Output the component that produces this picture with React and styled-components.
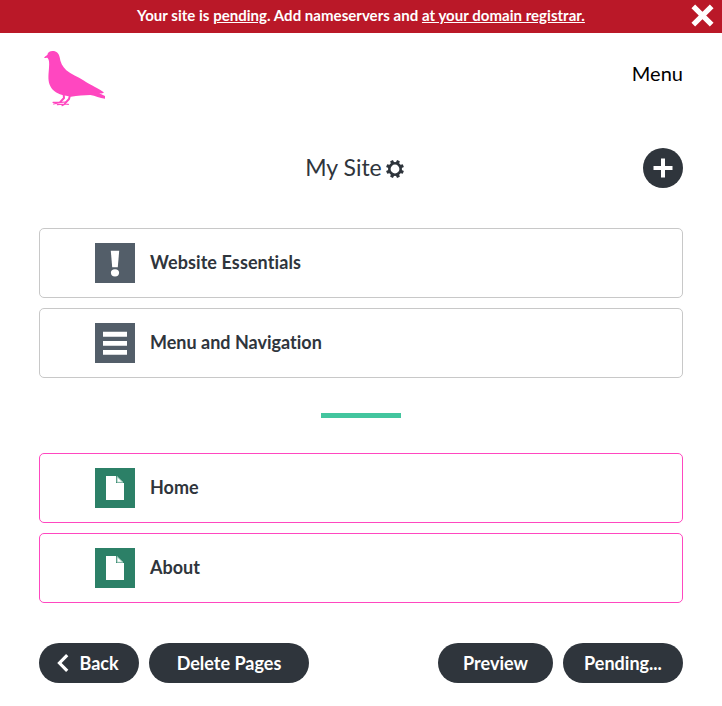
import React from "react";
import styled, { createGlobalStyle } from "styled-components";

const GlobalStyle = createGlobalStyle`
  *, *::before, *::after { box-sizing: border-box; }
  body {
    margin: 0;
    background: #fff;
    color: #2f353c;
    font-family: Lato, "Open Sans", sans-serif;
    font-variant-ligatures: none;
  }
  svg { display: block; flex: none; }
`;

const Banner = styled.div`
  display: grid;
  grid-template-columns: 38px 1fr 38px;
  align-items: center;
  height: 33px;
  background: #ba1828;
  color: #fff;
`;

const BannerText = styled.p`
  grid-column: 2;
  margin: 0;
  padding-bottom: 4px;
  font-size: 15px;
  line-height: 20px;
  font-weight: 700;
  letter-spacing: 0.03px;
  text-align: center;
  white-space: nowrap;
`;

const BannerLink = styled.a`
  color: inherit;
  text-decoration: underline;
`;

const CloseButton = styled.button`
  display: flex;
  align-items: center;
  height: 33px;
  padding: 0 0 3px 7px;
  border: 0;
  background: none;
  color: inherit;
`;

const Page = styled.div`
  padding: 0 39px;
`;

const Header = styled.header`
  display: flex;
  justify-content: space-between;
  height: 115px;
  padding: 17px 0 0 5px;
`;

const MenuLink = styled.a`
  margin-top: 11px;
  color: #000;
  font-size: 20px;
  line-height: 24px;
`;

const TitleBar = styled.div`
  display: grid;
  grid-template-columns: 40px 1fr 40px;
  align-items: center;
  height: 40px;
`;

const Title = styled.h1`
  grid-column: 2;
  display: flex;
  justify-content: center;
  align-items: center;
  gap: 4px;
  margin: 0;
  padding: 1px 13px 0 0;
  font-size: 23px;
  line-height: 30px;
  font-weight: 400;
`;

const TitleText = styled.span`
  padding-bottom: 3px;
`;

const AddButton = styled.button`
  display: grid;
  place-items: center;
  width: 40px;
  height: 40px;
  padding: 0;
  border: 0;
  border-radius: 50%;
  background: #2f353c;
  color: #fff;
`;

const List = styled.ul`
  display: flex;
  flex-direction: column;
  gap: 10px;
  margin: ${(p) => (p.$spaced ? "40px 0 35px" : "35px 0 40px")};
  padding: 0;
  list-style: none;
`;

const Row = styled.li`
  display: flex;
  align-items: center;
  gap: 15px;
  height: 70px;
  padding-left: 55px;
  border: 1px solid ${(p) => (p.$page ? "#ff47c0" : "#c8c8c8")};
  border-radius: 5px;
  font-size: 18px;
  font-weight: 700;
`;

const Tile = styled.span`
  width: 40px;
  height: 40px;
  background: ${(p) => (p.$page ? "#2c8067" : "#535e69")};
`;

const RowLabel = styled.span`
  line-height: 22px;
  padding-bottom: 2px;
  letter-spacing: ${(p) => p.$tracking || 0}px;
`;

const Divider = styled.hr`
  width: 80px;
  height: 5px;
  margin: 0 auto;
  border: 0;
  background: #43c59e;
`;

const Actions = styled.footer`
  display: flex;
  justify-content: space-between;
`;

const ActionGroup = styled.div`
  display: flex;
  gap: 10px;
`;

const Pill = styled.button`
  display: flex;
  justify-content: center;
  align-items: center;
  gap: 10px;
  width: ${(p) => p.$width}px;
  height: 40px;
  padding: 0 ${(p) => p.$nudge || 0}px 0 0;
  border: 0;
  border-radius: 20px;
  background: #2f353c;
  color: #fff;
  font: 700 18px/22px Lato, "Open Sans", sans-serif;
  font-variant-ligatures: none;
`;

const Pigeon = () => (
  <svg width="62" height="57" viewBox="24 18 186 171" fill="#ff47c0">
    <path d="M24 42C28 36 31 35 34 33C35 25 41 21 50 21C62 21 69 29 71 40C73 55 79 68 91 79C105 91 126 99 142 109C156 120 176 126 203 145C205 148 197 149 190 148L207 156L207 164C191 163 178 155 163 153C145 153 124 156 105 158L79 153C59 147 47 137 41 122C35 106 38 87 39 71C40 57 40 48 35 42C30 40 28 43 24 42Z" />
    <g fill="none" stroke="#ff47c0" strokeLinejoin="round" strokeLinecap="round">
      <path d="M83 151L84 162L73 174" strokeWidth="6" />
      <path d="M102 154L99 165L87 178" strokeWidth="6" />
      <path d="M51 175L74 175L90 174M53 180L74 175" strokeWidth="3.6" />
      <path d="M64 182L88 180L97 181M78 185L88 180" strokeWidth="3.6" />
    </g>
  </svg>
);

const CloseIcon = () => (
  <svg width="23" height="23" viewBox="0 0 23 23">
    <path d="M2.3 2.3L20.7 20.7M20.7 2.3L2.3 20.7" stroke="currentColor" strokeWidth="5.2" />
  </svg>
);

const GearIcon = () => (
  <svg width="18" height="18" viewBox="-9 -9 18 18" fill="none" stroke="currentColor">
    <circle r="5.7" strokeWidth="2.6" />
    {[22.5, 67.5, 112.5, 157.5, 202.5, 247.5, 292.5, 337.5].map((a) => (
      <path key={a} d="M-1.8 -6L-1.5 -9H1.5L1.8 -6Z" fill="currentColor" stroke="none" transform={`rotate(${a})`} />
    ))}
  </svg>
);

const PlusIcon = () => (
  <svg width="20" height="20" viewBox="0 0 20 20">
    <path d="M8 0.5H12V8H19.5V12H12V19.5H8V12H0.5V8H8Z" fill="currentColor" />
  </svg>
);

const BackIcon = () => (
  <svg width="12" height="18" viewBox="0 0 12 18">
    <path d="M10.2 1.2L2.5 9L10.2 16.8" fill="none" stroke="currentColor" strokeWidth="3.2" />
  </svg>
);

const tileShapes = {
  alert: (
    <>
      <path d="M15.8 7.7H24.2L22.8 24.3H17.2Z" />
      <ellipse cx="20" cy="29.8" rx="4.1" ry="3.6" />
    </>
  ),
  menu: <path d="M8 8.7H32V13.8H8ZM8 17.9H32V22.7H8ZM8 26.9H32V31.7H8Z" />,
  page: (
    <>
      <path d="M11 8H21V15H29V32H11Z" />
      <path d="M22 8.5V14.3H28Z" stroke="#8cbfae" strokeWidth="1" />
    </>
  ),
};

const TileIcon = ({ name }) => (
  <svg width="40" height="40" viewBox="0 0 40 40" fill="#fff">
    {tileShapes[name]}
  </svg>
);

const Item = ({ icon, label, page, tracking }) => (
  <Row $page={page}>
    <Tile $page={page}>
      <TileIcon name={icon} />
    </Tile>
    <RowLabel $tracking={tracking}>{label}</RowLabel>
  </Row>
);

export default function App() {
  return (
    <>
      <GlobalStyle />
      <Banner>
        <BannerText>
          Your site is <BannerLink>pending</BannerLink>. Add nameservers and{" "}
          <BannerLink>at your domain registrar.</BannerLink>
        </BannerText>
        <CloseButton aria-label="Close">
          <CloseIcon />
        </CloseButton>
      </Banner>
      <Page>
        <Header>
          <Pigeon />
          <MenuLink>Menu</MenuLink>
        </Header>
        <TitleBar>
          <Title>
            <TitleText>My Site</TitleText>
            <GearIcon />
          </Title>
          <AddButton aria-label="Add page">
            <PlusIcon />
          </AddButton>
        </TitleBar>
        <List $spaced>
          <Item icon="alert" label="Website Essentials" tracking={0.1} />
          <Item icon="menu" label="Menu and Navigation" />
        </List>
        <Divider />
        <List>
          <Item page icon="page" label="Home" />
          <Item page icon="page" label="About" />
        </List>
        <Actions>
          <ActionGroup>
            <Pill $width={100} $nudge={2}>
              <BackIcon />
              Back
            </Pill>
            <Pill $width={160}>Delete Pages</Pill>
          </ActionGroup>
          <ActionGroup>
            <Pill $width={115}>Preview</Pill>
            <Pill $width={120}>Pending...</Pill>
          </ActionGroup>
        </Actions>
      </Page>
    </>
  );
}
